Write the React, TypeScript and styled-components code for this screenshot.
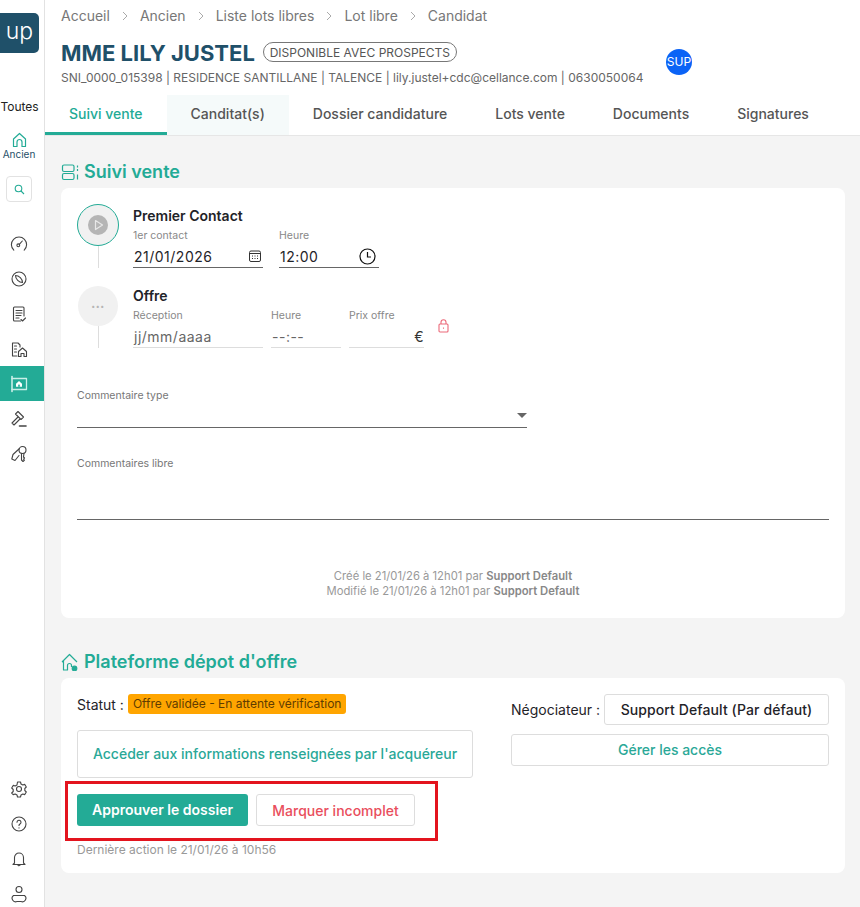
import React from "react";
import styled, { createGlobalStyle } from "styled-components";

const Global = createGlobalStyle`
  html, body { margin: 0; padding: 0; background: #f4f4f4; }
  body { font-family: Inter, "Liberation Sans", sans-serif; color: #1f2328; }
  * { box-sizing: border-box; }
`;

const Page = styled.div`
  display: flex;
  width: 860px;
  height: 907px;
  overflow: hidden;
`;

const Sidebar = styled.aside`
  width: 45px;
  flex: none;
  background: #fff;
  border-right: 1px solid #e2e2e2;
  display: flex;
  flex-direction: column;
  align-items: center;
  height: 100%;
  padding-top: 13px;
`;

const Logo = styled.div`
  align-self: flex-start;
  width: 39px;
  height: 40px;
  background: #1f5069;
  border-radius: 0 5px 5px 0;
  color: #fff;
  font-size: 23px;
  line-height: 36px;
  text-align: center;
  font-weight: 300;
`;

const AllLabel = styled.div`
  margin-top: 46px;
  font-size: 12px;
  line-height: 16px;
  color: #222;
  width: 39px;
  align-self: flex-start;
  text-align: center;
`;

const HomeBlock = styled.div`
  margin-top: 17px;
  width: 38px;
  align-self: flex-start;
  display: flex;
  flex-direction: column;
  align-items: center;
  font-size: 10px;
  line-height: 13px;
  color: #1f5069;
`;

const SearchBox = styled.div`
  margin-top: 15px;
  align-self: flex-start;
  margin-left: 6px;
  width: 26px;
  height: 26px;
  border: 1px solid #e2e2e2;
  border-radius: 4px;
  display: flex;
  align-items: center;
  justify-content: center;
`;

const NavList = styled.div`
  margin-top: 24px;
  width: 100%;
  display: flex;
  flex-direction: column;
`;

const NavItem = styled.div<{ $active?: boolean }>`
  height: 35px;
  width: 44px;
  display: flex;
  align-items: center;
  justify-content: center;
  padding-right: 6px;
  color: ${(p) => (p.$active ? "#c9efe8" : "#444")};
  background: ${(p) => (p.$active ? "#23ab96" : "transparent")};
`;

const BottomList = styled(NavList)`
  margin-top: auto;
  padding-bottom: 0;
  margin-bottom: -4px;
`;

const Body = styled.div`
  flex: 1;
  min-width: 0;
  display: flex;
  flex-direction: column;
`;

const Header = styled.header`
  background: #fff;
  height: 136px;
  border-bottom: 1px solid #e6e6e6;
  display: flex;
  flex-direction: column;
`;

const Crumbs = styled.nav`
  display: flex;
  align-items: center;
  padding: 6px 0 0 16px;
  height: 25px;
  font-size: 14px;
  color: #777;
  line-height: 17px;
`;

const CrumbSep = styled.span`
  display: inline-flex;
  width: 30px;
  justify-content: center;
  color: #aaa;
`;

const TitleRow = styled.div`
  display: flex;
  align-items: center;
  margin: 17px 0 0 16px;
  height: 22px;
`;

const Title = styled.h1`
  margin: 0;
  font-size: 22px;
  line-height: 22px;
  font-weight: 700;
  color: #1f5069;
  letter-spacing: 0;
`;

const StatusPill = styled.span`
  margin-left: 8px;
  height: 20px;
  width: 194px;
  border: 1px solid #777;
  border-radius: 10px;
  font-size: 12px;
  line-height: 19px;
  color: #555;
  text-align: center;
  white-space: nowrap;
  margin-top: -2px;
`;

const InfoRow = styled.div`
  position: relative;
  margin: 6px 0 0 16px;
  height: 16px;
  font-size: 12px;
  line-height: 16px;
  color: #666;
  white-space: nowrap;
`;

const Avatar = styled.div`
  position: absolute;
  left: 605px;
  top: -21px;
  width: 26px;
  height: 26px;
  border-radius: 50%;
  background: #0b63f6;
  color: #fff;
  font-size: 12px;
  line-height: 26px;
  text-align: center;
`;

const Tabs = styled.div`
  display: flex;
  margin-top: auto;
  height: 40px;
`;

const Tab = styled.div<{ $active?: boolean; $hover?: boolean }>`
  padding: 0 24px;
  height: 40px;
  line-height: 38px;
  font-size: 14px;
  font-weight: 500;
  white-space: nowrap;
  color: ${(p) => (p.$active ? "#23ab96" : "#555")};
  background: ${(p) => (p.$hover ? "#f5fafa" : "transparent")};
  border-bottom: 3px solid ${(p) => (p.$active ? "#23ab96" : "transparent")};
`;

const Main = styled.main`
  flex: 1;
  padding: 24px 15px 0 16px;
  display: flex;
  flex-direction: column;
`;

const SectionTitle = styled.h2`
  margin: 0;
  height: 28px;
  display: flex;
  align-items: center;
  gap: 5px;
  font-size: 18px;
  line-height: 24px;
  font-weight: 600;
  color: #23ab96;
  padding-bottom: 4px;
`;

const Card = styled.section`
  background: #fff;
  border-radius: 8px;
  padding: 16px;
`;

const SaleCard = styled(Card)`
  height: 430px;
  margin-bottom: 32px;
  display: flex;
  flex-direction: column;
`;

const OfferCard = styled(Card)`
  padding-bottom: 15px;
`;

const Step = styled.div`
  display: flex;
  height: 81px;
`;

const StepMarker = styled.div`
  width: 42px;
  flex: none;
  margin-right: 14px;
  display: flex;
  flex-direction: column;
  align-items: center;
`;

const Ring = styled.div<{ $on?: boolean }>`
  flex: none;
  width: ${(p) => (p.$on ? "42px" : "40px")};
  height: ${(p) => (p.$on ? "42px" : "40px")};
  margin-top: ${(p) => (p.$on ? "0" : "1px")};
  border-radius: 50%;
  background: #f1f1f1;
  border: ${(p) => (p.$on ? "1px solid #23ab96" : "none")};
  display: flex;
  align-items: center;
  justify-content: center;
  color: #b5b5b5;
  font-size: 7px;
  letter-spacing: 0.5px;
`;

const Connector = styled.div`
  width: 1px;
  height: 22px;
  background: #ddd;
`;

const StepBody = styled.div<{ $top: number }>`
  padding-top: ${(p) => p.$top}px;
`;

const StepTitle = styled.div`
  font-size: 14px;
  line-height: 16px;
  font-weight: 600;
  color: #1f2328;
`;

const Fields = styled.div`
  display: flex;
  gap: 16px;
  align-items: flex-start;
`;

const TightFields = styled(Fields)`
  gap: 8px;
`;

const Field = styled.div<{ $w: number }>`
  width: ${(p) => p.$w}px;
`;

const FieldLabel = styled.div`
  font-size: 10.5px;
  line-height: 14px;
  margin-top: 5px;
  color: #888;
`;

const FieldValue = styled.div<{ $on?: boolean }>`
  height: 25px;
  display: flex;
  align-items: center;
  justify-content: space-between;
  font-size: 14px;
  letter-spacing: 0.5px;
  color: ${(p) => (p.$on ? "#1f2328" : "#666")};
  border-bottom: 1px solid ${(p) => (p.$on ? "#666" : "#ddd")};
  padding: 2px 2px 0 1px;
`;

const FieldEnd = styled(FieldValue)`
  justify-content: flex-end;
  color: #333;
  padding-right: 0;
`;

const LockMark = styled.div`
  margin: 13px 0 0 6px;
  color: #ec6a7a;
`;

const CommentLabel = styled.div<{ $top: number }>`
  margin-top: ${(p) => p.$top}px;
  font-size: 10.5px;
  line-height: 14px;
  color: #777;
`;

const SelectLine = styled.div`
  width: 450px;
  height: 25px;
  border-bottom: 1px solid #666;
  display: flex;
  justify-content: flex-end;
  align-items: center;
`;

const Caret = styled.span`
  width: 0;
  height: 0;
  border-left: 5px solid transparent;
  border-right: 5px solid transparent;
  border-top: 5px solid #666;
`;

const FreeLine = styled.div`
  height: 49px;
  border-bottom: 1px solid #666;
`;

const Audit = styled.div`
  margin-top: 49px;
  text-align: center;
  font-size: 11.25px;
  line-height: 15px;
  color: #999;
  b { font-weight: 600; color: #888; }
`;

const OfferGrid = styled.div`
  display: flex;
  justify-content: space-between;
`;

const OfferLeft = styled.div`
  width: 396px;
`;

const OfferRight = styled.div`
  width: 318px;
  display: flex;
  flex-direction: column;
  gap: 9px;
`;

const StatusRow = styled.div`
  display: flex;
  align-items: center;
  height: 20px;
  font-size: 14px;
  gap: 4px;
`;

const Tag = styled.span`
  background: #ffa500;
  color: #5f3c00;
  font-size: 12px;
  line-height: 20px;
  height: 20px;
  padding: 0 5px;
  border-radius: 3px;
  white-space: nowrap;
`;

const OutlineButton = styled.div<{ $h: number; $w?: number; $color?: string }>`
  height: ${(p) => p.$h}px;
  width: ${(p) => (p.$w ? `${p.$w}px` : "auto")};
  flex: none;
  display: flex;
  align-items: center;
  justify-content: center;
  background: #fff;
  border: 1px solid #ddd;
  border-radius: 3px;
  font-size: 14px;
  font-weight: 500;
  white-space: nowrap;
  color: ${(p) => p.$color ?? "#2aa897"};
`;

const LinkButton = styled(OutlineButton)`
  padding-bottom: 2px;
`;

const NameButton = styled(OutlineButton)`
  letter-spacing: 0.1px;
`;

const AccessLink = styled(LinkButton)`
  margin-top: 16px;
`;

const ActionsWrap = styled.div`
  position: relative;
  display: flex;
  gap: 8px;
  margin-top: 16px;
`;

const Highlight = styled.div`
  position: absolute;
  left: -12px;
  top: -13px;
  width: 373px;
  height: 60px;
  border: 3px solid #e3141e;
  pointer-events: none;
`;

const PrimaryButton = styled.div`
  width: 171px;
  height: 32px;
  background: #23ab96;
  color: #fff;
  border-radius: 3px;
  font-size: 14px;
  font-weight: 600;
  line-height: 32px;
  text-align: center;
`;

const LastAction = styled.div`
  margin-top: 16px;
  font-size: 12px;
  line-height: 16px;
  color: #999;
`;

const NegotiatorRow = styled.div`
  display: flex;
  align-items: center;
  justify-content: space-between;
  font-size: 14px;
  color: #1f2328;
`;

const icon = { fill: "none", stroke: "currentColor", strokeWidth: 1.1, strokeLinecap: "round", strokeLinejoin: "round" } as const;

const Svg: React.FC<{ s?: number; children: React.ReactNode }> = ({ s = 18, children }) => (
  <svg width={s} height={s} viewBox="0 0 18 18" {...icon}>
    {children}
  </svg>
);

const Chevron = () => (
  <CrumbSep>
    <svg width="8" height="10" viewBox="0 0 8 10" fill="none" stroke="currentColor" strokeWidth="1">
      <path d="M2 1l4 4-4 4" />
    </svg>
  </CrumbSep>
);

const crumbs = ["Accueil", "Ancien", "Liste lots libres", "Lot libre", "Candidat"];

export default function App() {
  return (
    <Page>
      <Global />
      <Sidebar>
        <Logo>up</Logo>
        <AllLabel>Toutes</AllLabel>
        <HomeBlock>
          <svg width="15" height="16" viewBox="0 0 15 16" fill="none" strokeWidth="1.2" strokeLinejoin="round">
            <path d="M1.5 7L7.5 1.5 13.5 7v7.5H10V10a2.5 2.5 0 0 0-5 0v4.5H1.5z" stroke="#23ab96" />
          </svg>
          Ancien
        </HomeBlock>
        <SearchBox>
          <svg width="11" height="11" viewBox="0 0 11 11" fill="none" stroke="#23ab96" strokeWidth="1.1">
            <circle cx="4.5" cy="4.5" r="3.3" />
            <path d="M7 7l3 3" />
          </svg>
        </SearchBox>
        <NavList>
          <NavItem>
            <Svg>
              <path d="M3.8 15.2a7.6 7.6 0 1 1 10.4 0" />
              <circle cx="8.3" cy="10.3" r="1.4" />
              <path d="M9.3 9.3l3-3.3" />
            </Svg>
          </NavItem>
          <NavItem>
            <Svg>
              <circle cx="9" cy="9" r="7" />
              <path d="M5.5 5.5c3.5 0 7 3.5 7 7-3.5 0-7-3.5-7-7z" />
            </Svg>
          </NavItem>
          <NavItem>
            <Svg>
              <path d="M10.500 16H4.500A1 1 0 0 1 3.500 15V3a1 1 0 0 1 1-1h8.500a1 1 0 0 1 1 1v8" />
              <path d="M6 5.500h6M6 8h6M6 10.500h5M6 13h3" />
              <path d="M11 14.500l1.500 1.500 3-3" />
            </Svg>
          </NavItem>
          <NavItem>
            <Svg>
              <path d="M7 16H2.500V3H8l2 2v2" />
              <path d="M4.500 6h2M4.500 9h2M4.500 12h2" />
              <path d="M8.500 16.500v-5L12.500 8l4 3.500v5h-2.500v-3h-3v3z" />
            </Svg>
          </NavItem>
          <NavItem $active>
            <Svg>
              <path d="M2 1.500v15" strokeWidth="1.600" />
              <path d="M2 3.500h14.500v11H2" strokeWidth="1.300" />
              <path d="M6 11.800V8.800L9 6l3 2.800v3z" fill="#fff" stroke="none" />
              <rect x="8.200" y="9.600" width="1.600" height="2.200" fill="#23ab96" stroke="none" />
            </Svg>
          </NavItem>
          <NavItem>
            <Svg>
              <path d="M8 1.500l5.500 5.500-2.500 2.500L5.500 4zM8 7L2 13l2 2 6-6" />
              <path d="M9.500 16h6.500" strokeWidth="1.600" />
            </Svg>
          </NavItem>
          <NavItem>
            <Svg>
              <circle cx="12.500" cy="5" r="3.500" />
              <path d="M11.500 8.300V15l1.500 1.500 1.500-1.500-1-1 1-1-1-1 .5-3.700" />
              <path d="M9.500 3.500L3 9.500 1.800 14 5 15.500l4-5" />
            </Svg>
          </NavItem>
        </NavList>
        <BottomList>
          <NavItem>
            <Svg>
              <circle cx="9" cy="9" r="2.500" />
              <path d="M7.500 2h3l.5 2 1.800 1 2-.6 1.500 2.600-1.500 1.500v2l1.500 1.500-1.500 2.600-2-.6-1.800 1-.5 2h-3l-.5-2-1.800-1-2 .6L1.700 13l1.500-1.500v-2L1.700 8l1.500-2.600 2 .6L7 5z" />
            </Svg>
          </NavItem>
          <NavItem>
            <Svg>
              <circle cx="9" cy="9" r="7" />
              <path d="M7 7.200a2 2 0 1 1 3 1.800c-.7.400-1 .800-1 1.500" />
              <path d="M9 12.800v.2" />
            </Svg>
          </NavItem>
          <NavItem>
            <Svg>
              <path d="M4.500 13V7.500a4.500 4.500 0 0 1 9 0V13l1.500 1.500H3z" />
              <path d="M7.800 14.500a1.200 1.200 0 0 0 2.400 0" />
            </Svg>
          </NavItem>
          <NavItem>
            <Svg>
              <circle cx="9" cy="4.500" r="3" />
              <path d="M3.500 10.500h11a3.500 3.500 0 0 1-3.500 6H7a3.500 3.500 0 0 1-3.500-6z" />
            </Svg>
          </NavItem>
        </BottomList>
      </Sidebar>

      <Body>
        <Header>
          <Crumbs>
            {crumbs.map((c, i) => (
              <React.Fragment key={c}>
                {i > 0 && <Chevron />}
                {c}
              </React.Fragment>
            ))}
          </Crumbs>
          <TitleRow>
            <Title>MME LILY JUSTEL</Title>
            <StatusPill>DISPONIBLE AVEC PROSPECTS</StatusPill>
          </TitleRow>
          <InfoRow>
            SNI_0000_015398 | RESIDENCE SANTILLANE | TALENCE | lily.justel+cdc@cellance.com | 0630050064
            <Avatar>SUP</Avatar>
          </InfoRow>
          <Tabs>
            <Tab $active>Suivi vente</Tab>
            <Tab $hover>Canditat(s)</Tab>
            <Tab>Dossier candidature</Tab>
            <Tab>Lots vente</Tab>
            <Tab>Documents</Tab>
            <Tab>Signatures</Tab>
          </Tabs>
        </Header>

        <Main>
          <SectionTitle>
            <svg width="18" height="18" viewBox="0 0 18 18" fill="none" stroke="#23ab96" strokeWidth="1.2">
              <rect x="1.500" y="2" width="11.500" height="6.500" rx="1.500" />
              <rect x="1.500" y="10.500" width="11.500" height="6" rx="1.500" />
              <path d="M16.500 2.500v2M16.500 6v2M16.500 11.500v5" />
            </svg>
            Suivi vente
          </SectionTitle>
          <SaleCard>
            <Step>
              <StepMarker>
                <Ring $on>
                  <svg width="20" height="20" viewBox="0 0 20 20">
                    <circle cx="10" cy="10" r="10" fill="#b5b5b5" />
                    <path d="M7.500 5.500l7 4.500-7 4.500z" fill="none" stroke="#e8e8e8" strokeWidth="1.200" strokeLinejoin="round" />
                  </svg>
                </Ring>
                <Connector />
              </StepMarker>
              <StepBody $top={4}>
                <StepTitle>Premier Contact</StepTitle>
                <Fields>
                  <Field $w={130}>
                    <FieldLabel>1er contact</FieldLabel>
                    <FieldValue $on>
                      21/01/2026
                      <svg width="12" height="12" viewBox="0 0 12 12" fill="none" stroke="#333" strokeWidth="1">
                        <rect x="0.500" y="1" width="11" height="10.500" rx="1.500" />
                        <path d="M0.500 3.500h11M3 6h1M5.500 6h1M8 6h1M3 8.500h1M5.500 8.500h1M8 8.500h1" />
                      </svg>
                    </FieldValue>
                  </Field>
                  <Field $w={100}>
                    <FieldLabel>Heure</FieldLabel>
                    <FieldValue $on>
                      12:00
                      <svg width="17" height="17" viewBox="0 0 17 17" fill="none" stroke="#111" strokeWidth="1.200" style={{ marginRight: 1 }}>
                        <circle cx="8.500" cy="8.500" r="7.500" />
                        <path d="M8.500 4v5h3.500" />
                      </svg>
                    </FieldValue>
                  </Field>
                </Fields>
              </StepBody>
            </Step>
            <Step>
              <StepMarker>
                <Ring>•••</Ring>
                <Connector />
              </StepMarker>
              <StepBody $top={3}>
                <StepTitle>Offre</StepTitle>
                <TightFields>
                  <Field $w={130}>
                    <FieldLabel>Réception</FieldLabel>
                    <FieldValue>jj/mm/aaaa</FieldValue>
                  </Field>
                  <Field $w={70}>
                    <FieldLabel>Heure</FieldLabel>
                    <FieldValue>--:--</FieldValue>
                  </Field>
                  <Field $w={75}>
                    <FieldLabel>Prix offre</FieldLabel>
                    <FieldEnd>€</FieldEnd>
                  </Field>
                  <LockMark>
                    <svg width="11" height="14" viewBox="0 0 11 14" fill="none" stroke="currentColor" strokeWidth="1.100">
                      <rect x="1" y="5" width="9" height="8" rx="1" />
                      <path d="M3 5V3.200a2.500 2.500 0 0 1 5 0V5M5.500 8.500v1.200" />
                    </svg>
                  </LockMark>
                </TightFields>
              </StepBody>
            </Step>
            <CommentLabel $top={23}>Commentaire type</CommentLabel>
            <SelectLine>
              <Caret />
            </SelectLine>
            <CommentLabel $top={29}>Commentaires libre</CommentLabel>
            <FreeLine />
            <Audit>
              Créé le 21/01/26 à 12h01 par <b>Support Default</b>
              <br />
              Modifié le 21/01/26 à 12h01 par <b>Support Default</b>
            </Audit>
          </SaleCard>

          <SectionTitle>
            <svg width="18" height="18" viewBox="0 0 18 18" fill="none" stroke="#23ab96" strokeWidth="1.200" strokeLinejoin="round">
              <path d="M1 9L8.500 1.500 16 9M2.500 7.500V17h4v-4.500a2 2 0 0 1 4 0V14" />
              <circle cx="13.500" cy="15.500" r="2.300" fill="#23ab96" />
            </svg>
            Plateforme dépot d'offre
          </SectionTitle>
          <OfferCard>
            <OfferGrid>
              <OfferLeft>
                <StatusRow>
                  Statut :<Tag>Offre validée - En attente vérification</Tag>
                </StatusRow>
                <AccessLink $h={48}>Accéder aux informations renseignées par l'acquéreur</AccessLink>
                <ActionsWrap>
                  <PrimaryButton>Approuver le dossier</PrimaryButton>
                  <OutlineButton $h={32} $w={159} $color="#e94e5c">
                    Marquer incomplet
                  </OutlineButton>
                  <Highlight />
                </ActionsWrap>
                <LastAction>Dernière action le 21/01/26 à 10h56</LastAction>
              </OfferLeft>
              <OfferRight>
                <NegotiatorRow>
                  Négociateur :
                  <NameButton $h={31} $w={225} $color="#1f2328">
                    Support Default (Par défaut)
                  </NameButton>
                </NegotiatorRow>
                <LinkButton $h={32}>Gérer les accès</LinkButton>
              </OfferRight>
            </OfferGrid>
          </OfferCard>
        </Main>
      </Body>
    </Page>
  );
}
